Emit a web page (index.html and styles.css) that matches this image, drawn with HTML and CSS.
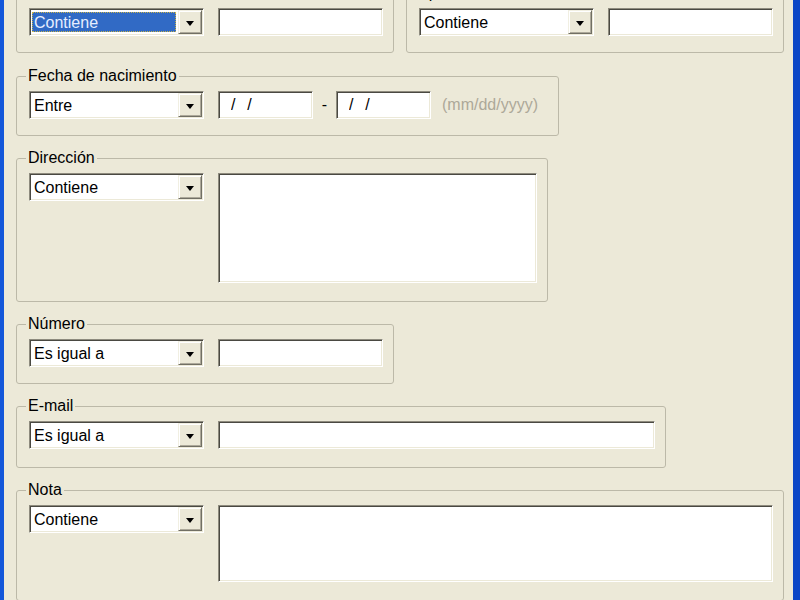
FILE: index.html
```html
<!DOCTYPE html>
<html lang="es">
<head>
    <meta charset="UTF-8">
    <title>Buscar contactos</title>
    <link rel="stylesheet" href="styles.css">
</head>
<body>
    <div class="window">
        <div class="form">

            <!-- Nombre / Apellido -->
            <div class="row">
                <fieldset class="group w-half">
                    <legend>Nombre</legend>
                    <div class="fields">
                        <div class="combo focused"><span class="combo-value">Contiene</span><span class="combo-btn"></span></div>
                        <input class="text grow" type="text">
                    </div>
                </fieldset>
                <fieldset class="group w-half">
                    <legend>Apellido</legend>
                    <div class="fields">
                        <div class="combo"><span class="combo-value">Contiene</span><span class="combo-btn"></span></div>
                        <input class="text grow" type="text">
                    </div>
                </fieldset>
            </div>

            <fieldset class="group w-date first">
                <legend>Fecha de nacimiento</legend>
                <div class="fields">
                    <div class="combo"><span class="combo-value">Entre</span><span class="combo-btn"></span></div>
                    <div class="date-range">
                        <input class="text date" type="text" value="/  /">
                        <span class="date-sep">-</span>
                        <input class="text date" type="text" value="/  /">
                        <span class="hint">(mm/dd/yyyy)</span>
                    </div>
                </div>
            </fieldset>

            <fieldset class="group tall w-address">
                <legend>Dirección</legend>
                <div class="fields">
                    <div class="combo"><span class="combo-value">Contiene</span><span class="combo-btn"></span></div>
                    <textarea class="text grow address"></textarea>
                </div>
            </fieldset>

            <fieldset class="group w-half">
                <legend>Número</legend>
                <div class="fields">
                    <div class="combo"><span class="combo-value">Es igual a</span><span class="combo-btn"></span></div>
                    <input class="text grow" type="text">
                </div>
            </fieldset>

            <fieldset class="group w-email">
                <legend>E-mail</legend>
                <div class="fields">
                    <div class="combo"><span class="combo-value">Es igual a</span><span class="combo-btn"></span></div>
                    <input class="text grow" type="text">
                </div>
            </fieldset>

            <fieldset class="group tall w-full">
                <legend>Nota</legend>
                <div class="fields">
                    <div class="combo"><span class="combo-value">Contiene</span><span class="combo-btn"></span></div>
                    <textarea class="text grow note"></textarea>
                </div>
            </fieldset>

        </div>
    </div>
</body>
</html>
```

FILE: styles.css
```css
body {
    margin: 0;
    font-family: "Liberation Sans", Arial, sans-serif;
    font-size: 16px;
    color: #000;
    background-color: #ece9d8;
}

/* marco azul de la ventana */
.window {
    height: 600px;
    box-sizing: border-box;
    border-left: 4px solid #1357da;
    border-right: 7px solid #0a46c6;
    background-color: #ece9d8;
    overflow: hidden;
}

.form {
    padding-left: 12px;
}

.row {
    display: flex;
    gap: 12px;
    margin-top: -15px;
}

/* Grupos */
.group {
    box-sizing: border-box;
    margin: 14px 0 0 0;
    padding: 7px 10px 16px 12px;
    border: 1px solid #bcb9a8;
    border-radius: 3px;
    min-width: 0;
}

.row .group {
    margin-top: 0;
}

.group.first {
    margin-top: 15px;
}

.group.tall,
.w-email {
    padding-bottom: 18px;
}

.group legend {
    padding: 0 2px;
    margin-left: -3px;
    line-height: 16px;
}

.w-half { width: 378px; }
.w-date { width: 543px; }
.w-address { width: 532px; }
.w-email { width: 650px; }
.w-full { width: 768px; }

.fields {
    display: flex;
    align-items: flex-start;
    gap: 14px;
}

/* Combo */
.combo {
    display: flex;
    box-sizing: border-box;
    flex: none;
    width: 175px;
    height: 28px;
    padding: 1px;
    background-color: #fff;
    border: 1px solid;
    border-color: #8e8b7e #fff #fff #8e8b7e;
    box-shadow: inset 1px 1px 0 #4a4942, inset -1px -1px 0 #ece9d8;
}

.combo-value {
    flex: 1;
    padding-left: 3px;
    line-height: 25px;
    white-space: nowrap;
}

.combo.focused .combo-value {
    margin: 2px 2px 2px 1px;
    padding-left: 2px;
    line-height: 21px;
    background-color: #316ac5;
    color: #e6eeff;
    outline: 1px dotted #c7b24a;
    outline-offset: -1px;
}

.combo-btn {
    display: flex;
    align-items: center;
    justify-content: center;
    box-sizing: border-box;
    width: 24px;
    height: 24px;
    background-color: #ece9d8;
    border: 1px solid;
    border-color: #f1efe2 #716f64 #716f64 #f1efe2;
    box-shadow: inset 1px 1px 0 #fff, inset -1px -1px 0 #aca899;
}

.combo-btn::after {
    content: "";
    border-top: 5px solid #000;
    border-left: 4px solid transparent;
    border-right: 4px solid transparent;
    margin-top: 2px;
}

/* Cajas de texto */
.text {
    box-sizing: border-box;
    height: 28px;
    margin: 0;
    padding: 0 4px;
    font: inherit;
    color: #000;
    background-color: #fff;
    border: 1px solid;
    border-color: #8e8b7e #fff #fff #8e8b7e;
    box-shadow: inset 1px 1px 0 #4a4942, inset -1px -1px 0 #ece9d8;
    outline: none;
}

.grow {
    flex: 1;
    min-width: 0;
}

textarea.text {
    resize: none;
    padding: 4px;
}

.address { height: 110px; }
.note { height: 77px; }

.date-range {
    display: flex;
    align-items: center;
}

.text.date {
    width: 95px;
    padding-left: 12px;
    letter-spacing: 1px;
}

.date-sep {
    width: 23px;
    text-align: center;
}

.hint {
    margin-left: 11px;
    color: #aca899;
}
```
